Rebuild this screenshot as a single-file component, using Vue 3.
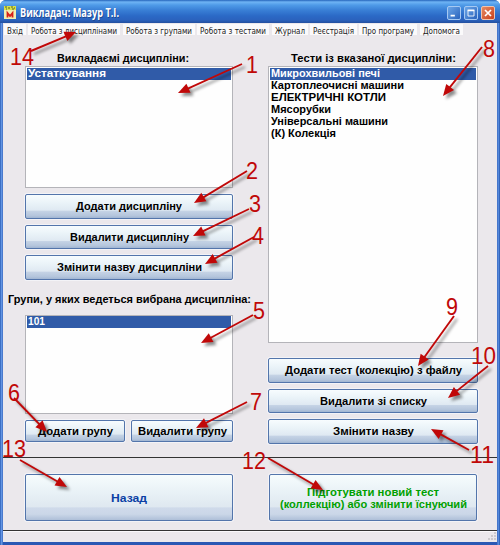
<script setup>
import { h } from 'vue'

const Label = (p) =>
  h('svg', { width: p.w, height: 12, class: 'label' }, [
    h('text', { x: 0, y: 10, textLength: p.w, lengthAdjust: 'spacingAndGlyphs' }, p.t),
  ])
Label.props = ['t', 'w']

const menu = [
  ['Вхід', 16], ['Робота з дисциплінами', 86], ['Робота з групами', 66], ['Робота з тестами', 66],
  ['Журнал', 30], ['Реєстрація', 41], ['Про програму', 52], ['Допомога', 37],
]
const tests = [
  ['Микрохвильові печі', 109], ['Картоплеочисні машини', 133], ['ЕЛЕКТРИЧНІ КОТЛИ', 115],
  ['Мясорубки', 60], ['Універсальні машини', 117], ['(К) Колекція', 65],
]
const disciplineActions = [['Додати дисципліну', 106], ['Видалити дисципліну', 119], ['Змінити назву дисципліни', 145]]
const testActions = [['Додати тест (колекцію) з файлу', 177], ['Видалити зі списку', 107], ['Змінити назву', 81]]

// n, number x, baseline, number width, tail x/y, tip x/y
const marks = [
  [14, 10, 65, 24, 31, 51, 76, 32],
  [1, 246, 73, 12, 242, 64, 178, 93],
  [2, 246, 179, 12, 247, 171, 194, 203],
  [3, 249, 212, 12, 249, 209, 193, 236],
  [4, 252, 244, 12, 254, 237, 205, 264],
  [5, 253, 319, 12, 253, 315, 201, 343],
  [6, 8, 401, 12, 14, 398, 47, 432],
  [7, 250, 410, 12, 247, 402, 196, 428],
  [8, 483, 57, 12, 482, 47, 443, 96],
  [9, 446, 315, 12, 454, 316, 418, 366],
  [10, 471, 364, 25, 488, 366, 448, 398],
  [11, 470, 463, 24, 469, 450, 431, 429],
  [12, 242, 469, 24, 268, 458, 323, 490],
  [13, 2, 457, 24, 20, 460, 67, 487],
].map(([n, x, y, w, x1, y1, x2, y2]) => ({
  n, x, y, w, x1, y1, x2, y2,
  len: Math.hypot(x2 - x1, y2 - y1),
  deg: (Math.atan2(y2 - y1, x2 - x1) * 180) / Math.PI,
}))
</script>

<template>
  <div class="window">
    <header class="title">
      <svg class="app-icon" width="12" height="13" viewBox="0 0 12 13">
        <rect width="12" height="13" fill="#f3eeb0" />
        <rect width="12" height="4" fill="#d9e04a" />
        <path d="M1 1h2M4 2h2M7 1h2M10 2h1M2 3h1M8 3h2" stroke="#536222" />
        <path d="M3.5 11.5V7L6 10l2.5-3v4.5" fill="none" stroke="#d8201a" stroke-width="1.8" />
      </svg>
      <svg class="caption" width="99" height="16"><text x="0" y="12" textLength="99" lengthAdjust="spacingAndGlyphs">Викладач: Мазур Т.І.</text></svg>
      <div class="controls">
        <svg class="ctl" viewBox="0 0 14 14"><path d="M3 10h5" stroke="#fff" stroke-width="2" /></svg>
        <svg class="ctl" viewBox="0 0 14 14"><path d="M3.5 4v6.5h7V4" fill="none" stroke="#fff" /><path d="M3 4h8" stroke="#fff" stroke-width="2" /></svg>
        <svg class="ctl close" viewBox="0 0 14 14"><path d="M3.5 3.5l7 7M10.5 3.5l-7 7" stroke="#fff" stroke-width="2" /></svg>
      </div>
    </header>

    <nav class="menu">
      <span v-for="[t, w] in menu" :key="t" class="menu-item"><Label :t="t" :w="w" /></span>
    </nav>

    <main class="body">
      <section class="left">
        <div class="heading first"><Label t="Викладаємі дисципліни:" :w="132" /></div>
        <div class="list disciplines"><div class="row selected"><Label t="Устаткування" :w="78" /></div></div>
        <div class="stack">
          <button v-for="[t, w] in disciplineActions" :key="t" class="btn"><Label :t="t" :w="w" /></button>
        </div>
        <div class="heading groups-heading"><Label t="Групи, у яких ведеться вибрана дисципліна:" :w="243" /></div>
        <div class="list groups"><div class="row selected"><Label t="101" :w="17" /></div></div>
        <div class="pair">
          <button class="btn"><Label t="Додати групу" :w="75" /></button>
          <button class="btn"><Label t="Видалити групу" :w="89" /></button>
        </div>
      </section>
      <section class="right">
        <div class="heading first"><Label t="Тести із вказаної дисципліни:" :w="165" /></div>
        <div class="list tests">
          <div v-for="([t, w], i) in tests" :key="t" class="row" :class="{ selected: i === 0 }"><Label :t="t" :w="w" /></div>
        </div>
        <div class="stack test-stack">
          <button v-for="[t, w] in testActions" :key="t" class="btn"><Label :t="t" :w="w" /></button>
        </div>
      </section>
    </main>

    <footer class="bottom">
      <button class="btn big blue"><Label t="Назад" :w="36" /></button>
      <button class="btn big green">
        <Label t="Підготувати новий тест" :w="132" />
        <Label t="(коллекцію) або змінити їснуючий" :w="187" />
      </button>
    </footer>
    <div class="status">
      <svg width="10" height="10" viewBox="0 0 10 10"><path d="M7 1h2M4 4h2M7 4h2M1 7h2M4 7h2M7 7h2" stroke="#c3c0c4" stroke-width="1.6" /></svg>
    </div>

    <svg class="marks" width="500" height="545">
      <g v-for="m in marks" :key="m.n" class="arrow">
        <g :transform="`translate(${m.x1} ${m.y1}) rotate(${m.deg})`">
          <path :d="`M0 0H${m.len - 9}`" stroke="#c00808" stroke-width="1.9" />
          <path :d="`M${m.len} 0l-11.5 -5v10z`" fill="#c00808" />
        </g>
      </g>
      <text v-for="m in marks" :key="'n' + m.n" :x="m.x" :y="m.y" :textLength="m.w" lengthAdjust="spacingAndGlyphs">{{ m.n }}</text>
    </svg>
  </div>
</template>

<style>
body { margin: 0; background: #fff; overflow: hidden; }
.label { display: block; flex: none; overflow: visible; }
.label text { font: bold 11px "Liberation Sans", Arial, sans-serif; fill: currentColor; }
.menu-item .label text { font: 8.5px "DejaVu Sans Condensed", sans-serif; fill: #222; }
</style>
<style scoped>
.window { position: relative; box-sizing: border-box; width: 500px; height: 545px; display: flex; flex-direction: column; padding: 0 3px 3px; overflow: hidden;
  background: linear-gradient(90deg, #1f4fa8 0, #5b8fe0 1px, #6a9be6 2px, #2a58b4 3px, #2a58b4 497px, #5f92e2 498px, #4a7fd4 499px, #1f4ba0 500px); border-radius: 6px 6px 0 0; font-family: "Liberation Sans", Arial, sans-serif; }
.title { box-sizing: border-box; height: 23px; flex: none; margin: 0 -3px; padding: 2px 5px 0 4px; display: flex; align-items: center;
  background: linear-gradient(#2565bb 0, #6fb4f4 2px, #4f9be8 5px, #3a80d6 10px, #2b69c6 16px, #2b62bd 20px, #234f9f 23px); }
.app-icon { margin-right: 4px; }
.caption { overflow: visible; }
.caption text { font: bold 12px "Open Sans", "Noto Sans", sans-serif; fill: #fff; text-shadow: 1px 1px 0 #1d4790; }
.controls { margin-left: auto; display: flex; gap: 3px; }
.ctl { width: 14px; height: 14px; box-sizing: border-box; border: 1px solid #a6c9f2; border-radius: 2px; background: linear-gradient(135deg, #6ba6e8, #2a63bc); }
.close { background: linear-gradient(135deg, #e58b62, #c8401c); border-color: #f0c3ac; }
.menu { height: 13px; flex: none; display: flex; gap: 2.4px; background: #ebe8ec; padding: 1px 0 0 1px; }
.menu-item { height: 11px; background: #fbfafb; padding: 0 3px; display: flex; }
.body { flex: none; height: 421px; display: flex; gap: 35px; background: #ebe8ec; border-bottom: 1px solid #333; padding-left: 22px; box-sizing: border-box; color: #000; }
.left { width: 208px; flex: none; }
.right { width: 210px; flex: none; }
.heading { display: flex; justify-content: center; }
.first { margin-top: 15px; height: 14px; padding-right: 12px; }
.right .first { padding-right: 0; }
.list { box-sizing: border-box; border: 1px solid #b4b4b9; background: #fefefe; padding: 1px; }
.row { height: 12px; padding-left: 1px; display: flex; }
.row .label { margin-top: -1px; }
.selected { background: #305ba8; color: #fff; height: 12px; }
.disciplines { height: 122px; }
.stack { display: flex; flex-direction: column; gap: 6px; margin-top: 6px; }
.btn { box-sizing: border-box; height: 24.5px; margin: 0; padding: 0; border: 1px solid #5375ab; border-radius: 2px; display: flex; flex-direction: column; align-items: center; justify-content: center; color: #000;
  background: linear-gradient(#f7fcfe 0, #eaf3f8 35%, #dfe9f2 66%, #c5d3e5 70%, #b4c5dc 90%, #a0b5d2 100%); box-shadow: 0 0 0 1px #f3f3f7; }
.groups-heading { margin: 13px -20px 0 -17px; justify-content: flex-start; height: 22px; }
.groups { height: 99px; padding-top: 0; }
.pair { display: grid; grid-template-columns: 100px 102px; gap: 6px; margin-top: 6px; }
.pair .btn { height: 22.5px; }
.tests { height: 277px; }
.test-stack { margin-top: 15px; }
.bottom { flex: none; height: 73px; box-sizing: border-box; display: flex; gap: 36px; background: #ebe8ec; border-bottom: 1px solid #333; padding: 16px 0 0 22px; }
.big { width: 208px; height: 47px; background: linear-gradient(#f6fcfd 0, #e8f1f6 40%, #dfe8f0 71%, #cfdaea 73%, #cbd7e8 87%, #aebfd8 100%); }
.blue { color: #0b3fa5; }
.green { color: #00a000; }
.status { flex: 1; background: #ebe8ec; box-shadow: inset 0 1px #faf9fb; display: flex; justify-content: flex-end; align-items: flex-end; }
.marks { position: absolute; inset: 0; pointer-events: none; }
.marks text { font: 23px "Liberation Sans", Arial, sans-serif; fill: #c00808; }
.arrow { filter: drop-shadow(3px 3px 1.5px rgba(0, 0, 0, 0.45)); }
</style>
